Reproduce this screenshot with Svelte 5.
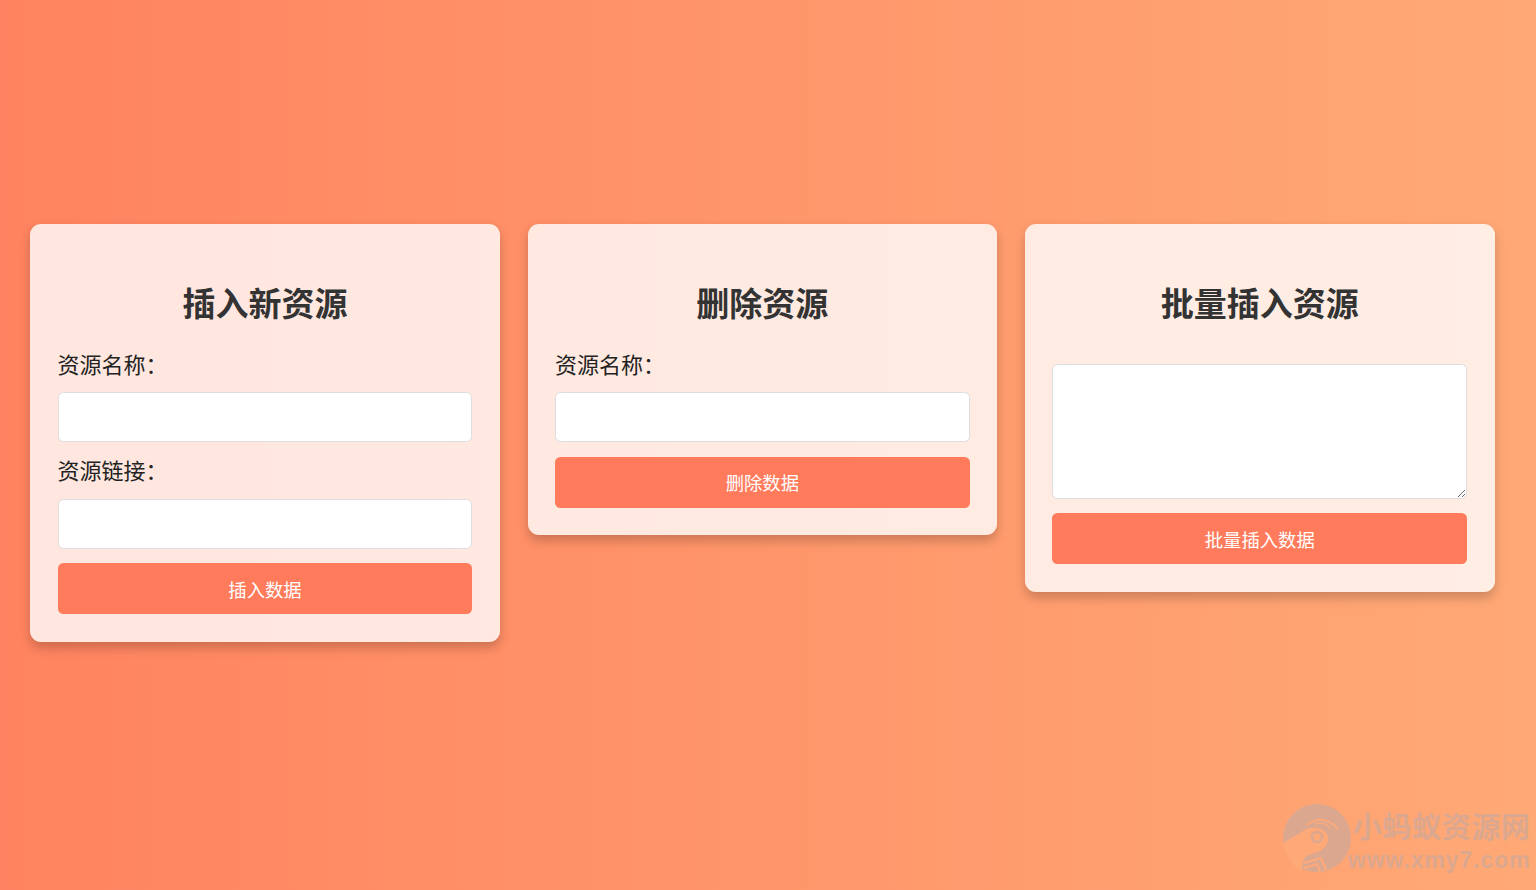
<script>
  let name = "";
  let link = "";
  let deleteName = "";
  let batch = "";
</script>

<div class="page">
  <div class="cards">
    <section class="card">
      <h2>插入新资源</h2>
      <label for="name">资源名称：</label>
      <input id="name" type="text" bind:value={name} />
      <label for="link">资源链接：</label>
      <input id="link" type="text" bind:value={link} />
      <button type="button">插入数据</button>
    </section>

    <section class="card">
      <h2>删除资源</h2>
      <label for="del">资源名称：</label>
      <input id="del" type="text" bind:value={deleteName} />
      <button type="button">删除数据</button>
    </section>

    <section class="card">
      <h2>批量插入资源</h2>
      <textarea bind:value={batch} aria-label="批量插入资源"></textarea>
      <button type="button">批量插入数据</button>
    </section>
  </div>

  <!-- site watermark, sits over the page corner -->
  <div class="watermark">
    <svg class="mark" viewBox="0 0 68 68" width="68" height="68" aria-hidden="true">
      <circle cx="34" cy="34" r="34" fill="#dba88f" />
      <path d="M0 39 C6 35 12 32 17 29 C22 25 28 23 33 24 C41 25 46 30 45 36 C44 42 40 46 34 48 C29 50 25 51 22 53 C20 58 19 63 18 68 C8 60 2 50 0 39 Z" fill="#ffa878" />
      <circle cx="34" cy="33" r="5" fill="none" stroke="#dba88f" stroke-width="2.5" />
      <path d="M24 21 C32 14 45 13 55 25" fill="none" stroke="#ffa878" stroke-width="1.8" />
      <path d="M32 20 C38 18 44 20 48 25" fill="none" stroke="#ffa878" stroke-width="1.2" />
      <path d="M21 59 L38 54 L43 66 M21 64 L34 60 L37 68" fill="none" stroke="#ffa878" stroke-width="2" />
    </svg>
    <div class="mark-text">
      <span class="site">小蚂蚁资源网</span>
      <span class="url">www.xmy7.com</span>
    </div>
  </div>
</div>

<style>
  :global(body) {
    margin: 0;
  }

  .page {
    position: relative;
    height: 890px;
    overflow: hidden;
    box-sizing: border-box;
    padding: 224px 0 0 30.15px;
    background: linear-gradient(to right, #ff8360, #ffa976);
    font-family: "Liberation Sans", "Noto Sans CJK SC", sans-serif;
  }

  .cards {
    display: grid;
    grid-template-columns: repeat(3, 469.7px);
    gap: 27.7px;
    align-items: start;
  }

  .card {
    padding: 27.5px 27.4px;
    border-radius: 11px;
    background: rgba(255, 255, 255, 0.8);
    box-shadow: 0 5.5px 11px rgba(0, 0, 0, 0.2);
  }

  h2 {
    margin: 29.5px 0 21.5px;
    font-size: 33px;
    line-height: 48px;
    font-weight: 700;
    text-align: center;
    color: #333;
  }

  label {
    display: block;
    font-size: 22px;
    line-height: 30px;
    color: #222;
  }

  input,
  textarea {
    display: block;
    box-sizing: border-box;
    width: 100%;
    margin: 11.8px 0 14.5px;
    border: 1px solid #ddd;
    border-radius: 5.5px;
    background: #fff;
    font-size: 18px;
  }

  input {
    height: 50px;
  }

  textarea {
    height: 135px;
    margin-top: 35px;
    margin-bottom: 14px;
    resize: vertical;
  }

  button {
    display: block;
    width: 100%;
    height: 51.2px;
    padding: 0;
    border: none;
    border-radius: 5.5px;
    background: #ff7b5c;
    color: #fff;
    font-family: inherit;
    font-size: 18.33px;
    cursor: pointer;
  }

  .watermark {
    position: absolute;
    left: 1283px;
    top: 804px;
    display: flex;
    width: 253px;
    pointer-events: none;
  }

  .mark {
    flex: none;
  }

  .mark-text {
    display: flex;
    flex-direction: column;
    margin-left: -3px;
    color: #dba88f;
    font-weight: 700;
    white-space: nowrap;
  }

  .site {
    margin: 2px 0 0 5px;
    font-size: 29px;
    line-height: 44px;
    letter-spacing: 0.6px;
  }

  .url {
    margin-top: -3px;
    font-size: 23px;
    line-height: 26px;
    letter-spacing: 0.9px;
  }
</style>
